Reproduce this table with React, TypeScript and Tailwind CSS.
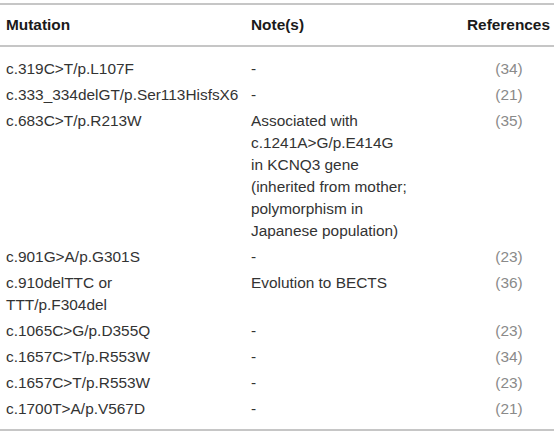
const ROWS: { mutation: string[]; note: string[]; ref: string }[] = [
  { mutation: ["c.319C>T/p.L107F"], note: ["-"], ref: "(34)" },
  { mutation: ["c.333_334delGT/p.Ser113HisfsX6"], note: ["-"], ref: "(21)" },
  {
    mutation: ["c.683C>T/p.R213W"],
    note: [
      "Associated with",
      "c.1241A>G/p.E414G",
      "in KCNQ3 gene",
      "(inherited from mother;",
      "polymorphism in",
      "Japanese population)",
    ],
    ref: "(35)",
  },
  { mutation: ["c.901G>A/p.G301S"], note: ["-"], ref: "(23)" },
  { mutation: ["c.910delTTC or", "TTT/p.F304del"], note: ["Evolution to BECTS"], ref: "(36)" },
  { mutation: ["c.1065C>G/p.D355Q"], note: ["-"], ref: "(23)" },
  { mutation: ["c.1657C>T/p.R553W"], note: ["-"], ref: "(34)" },
  { mutation: ["c.1657C>T/p.R553W"], note: ["-"], ref: "(23)" },
  { mutation: ["c.1700T>A/p.V567D"], note: ["-"], ref: "(21)" },
];

export default function App() {
  return (
    <div className="h-[432px] w-[558px] bg-white pt-[3px] font-['Liberation_Sans',Arial,sans-serif] text-[15.4px] text-[#333]">
      <div className="w-[554px] border-y-2 border-[#c6c6c6]">
        <div className="grid grid-cols-[245px_213px_1fr] border-b-2 border-[#c6c6c6] py-[10px] pl-[6px] font-bold leading-[20px] text-[#1a1a1a]">
          <div>Mutation</div>
          <div>Note(s)</div>
          <div className="pr-[4px] text-right">References</div>
        </div>
        <div className="pt-[9px] pb-[7px]">
          {ROWS.map((r, i) => (
            <div key={i} className="grid grid-cols-[245px_213px_1fr] py-[2px] pl-[6px] leading-[22px]">
              <div>
                {r.mutation.map((l) => (
                  <div key={l}>{l}</div>
                ))}
              </div>
              <div>
                {r.note.map((l) => (
                  <div key={l}>{l}</div>
                ))}
              </div>
              <div className="text-center text-[#8a8a8a]">{r.ref}</div>
            </div>
          ))}
        </div>
      </div>
    </div>
  );
}
